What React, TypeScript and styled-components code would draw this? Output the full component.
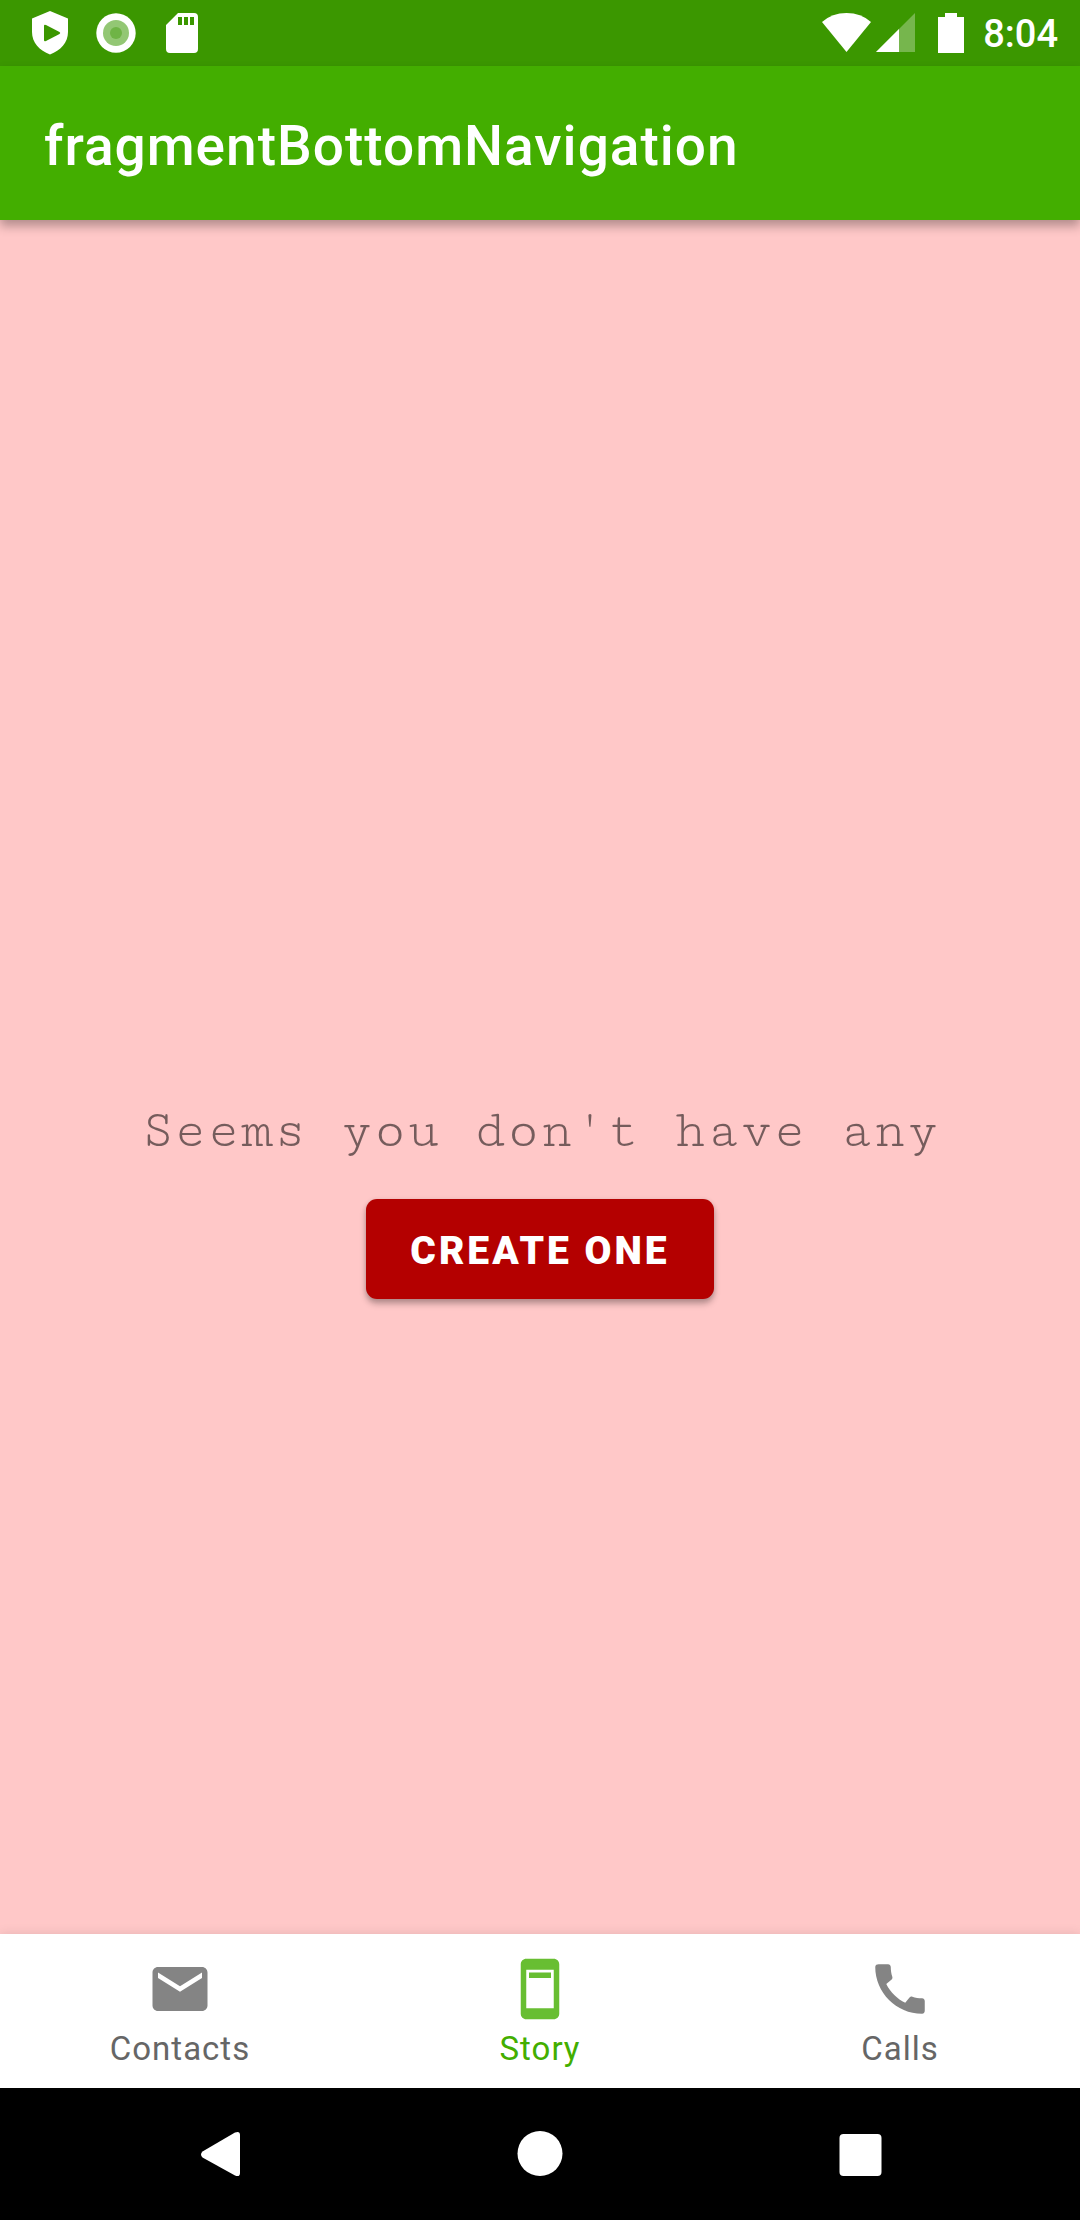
import React, { useState } from "react";
import styled, { createGlobalStyle } from "styled-components";

const GlobalStyle = createGlobalStyle`
  *, *::before, *::after { box-sizing: border-box; }
  body {
    margin: 0;
    background: #ffc8c8;
    font-family: Roboto, "Noto Sans", sans-serif;
  }
`;

const Screen = styled.div`
  display: flex;
  flex-direction: column;
  min-height: 100vh;
`;

const StatusBar = styled.div`
  display: flex;
  align-items: center;
  justify-content: space-between;
  height: 66px;
  padding: 0 22px 0 17px;
  background: #3b9700;
  color: #fff;
`;

const StatusGroup = styled.div`
  display: flex;
  align-items: center;
`;

const Glyph = styled.svg`
  display: block;
  height: 66px;
  fill: currentColor;
`;

const Clock = styled.time`
  padding-top: 2px;
  font-size: 38px;
  font-weight: 500;
  line-height: 66px;
`;

const AppBar = styled.header`
  display: flex;
  align-items: center;
  height: 154px;
  padding: 6px 44px 0;
  background: #43ae00;
  box-shadow: 0 6px 10px rgba(0, 0, 0, 0.3);
  z-index: 1;
`;

const Title = styled.h1`
  margin: 0;
  color: #fff;
  font-size: 55px;
  font-weight: 500;
  letter-spacing: 1px;
  line-height: 66px;
`;

const Content = styled.main`
  display: flex;
  flex: 1;
  flex-direction: column;
  align-items: center;
  justify-content: center;
  gap: 33px;
  padding-top: 240px;
  background: #ffc8c8;
`;

const Message = styled.p`
  margin: 0;
  color: rgba(0, 0, 0, 0.54);
  font-family: "Cutive Mono", "Liberation Mono", "Courier New", monospace;
  font-size: 55px;
  line-height: 70px;
  text-align: center;
`;

const CreateButton = styled.button`
  height: 100px;
  padding: 4px 44px 0;
  border: 0;
  border-radius: 11px;
  background: #b40000;
  box-shadow: 0 5px 6px rgba(0, 0, 0, 0.26), 0 1px 5px rgba(0, 0, 0, 0.12);
  color: #fff;
  font-family: inherit;
  font-size: 39px;
  font-weight: 900;
  letter-spacing: 3px;
  text-transform: uppercase;
  cursor: pointer;
`;

const Tabs = styled.nav`
  display: flex;
  height: 154px;
  background: #fff;
  box-shadow: 0 0 11px rgba(0, 0, 0, 0.1);
  z-index: 1;
`;

const Tab = styled.a<{ $active: boolean }>`
  display: flex;
  flex: 1;
  flex-direction: column;
  align-items: center;
  gap: 7px;
  padding-top: 22px;
  color: ${(p) => (p.$active ? "#43ae00" : "#666")};
  text-decoration: none;
`;

const TabIcon = styled.svg`
  width: 66px;
  height: 66px;
  fill: currentColor;
  opacity: 0.8;
`;

const TabLabel = styled.span`
  font-size: 33px;
  letter-spacing: 1px;
  line-height: 40px;
`;

const SystemBar = styled.div`
  display: flex;
  height: 132px;
  padding: 0 60px;
  background: #000;
`;

const SystemButton = styled.button`
  display: flex;
  flex: 1;
  align-items: center;
  justify-content: center;
  padding: 0;
  border: 0;
  background: none;
  color: #fff;
  cursor: pointer;
`;

const tabs = [
  {
    id: "contacts",
    label: "Contacts",
    path: "M20 4H4c-1.100 0-2 .9-2 2v12c0 1.100.9 2 2 2h16c1.100 0 2-.9 2-2V6c0-1.100-.9-2-2-2zm0 4l-8 5-8-5V6l8 5 8-5v2z",
  },
  {
    id: "story",
    label: "Story",
    path: "M17 1H7c-1.100 0-2 .9-2 2v18c0 1.100.9 2 2 2h10c1.100 0 2-.9 2-2V3c0-1.100-.9-2-2-2zm0 18H7V5h10v14zM8 6h8v2H8z",
  },
  {
    id: "calls",
    label: "Calls",
    path: "M20.010 15.380c-1.230 0-2.420-.2-3.530-.56-.35-.12-.74-.03-1.010.24l-1.570 1.970c-2.830-1.350-5.480-3.900-6.890-6.830l1.950-1.660c.27-.28.35-.67.24-1.020-.37-1.110-.56-2.300-.56-3.530 0-.54-.45-.99-.99-.99H4.190C3.650 3 3 3.240 3 3.990 3 13.280 10.730 21 20.010 21c.71 0 .99-.63.99-1.180v-3.450c0-.54-.45-.99-.99-.99z",
  },
];

export default function App() {
  const [active, setActive] = useState("story");

  return (
    <Screen>
      <GlobalStyle />
      <StatusBar>
        <StatusGroup>
          <Glyph width="66" viewBox="0 0 66 66" aria-hidden="true">
            <path
              fillRule="evenodd"
              d="M33 11L15 18.500V32c0 10.500 7.500 18.500 18 22.500 10.500-4 18-12 18-22.500V18.500zM27 26q0-2 2-1l13.500 7q1.500 1 0 2L29 41q-2 1-2-1z"
            />
          </Glyph>
          <Glyph width="66" viewBox="0 0 66 66" aria-hidden="true">
            <circle cx="33" cy="33" r="19.700" />
            <circle cx="33" cy="33" r="13" fill="#93c774" />
            <circle cx="33" cy="33" r="6" fill="#6fb446" />
          </Glyph>
          <Glyph width="66" viewBox="0 0 66 66" aria-hidden="true">
            <path
              fillRule="evenodd"
              d="M29 13h16q4 0 4 4v32q0 4-4 4H21q-4 0-4-4V25zM29 17v8h4v-8zM35 17v8h4v-8zM41 17v8h4v-8z"
            />
          </Glyph>
        </StatusGroup>
        <StatusGroup>
          <Glyph width="52" viewBox="0 0 52 66" aria-hidden="true">
            <path d="M1 22Q11 13 25.500 13T50 22L25.500 52z" />
          </Glyph>
          <Glyph width="44" viewBox="0 0 44 66" aria-hidden="true">
            <path d="M42 13v39H3z" opacity="0.3" />
            <path d="M26 29v23H3z" />
          </Glyph>
          <Glyph width="66" viewBox="0 0 66 66" aria-hidden="true">
            <path d="M28 13h12v4h7v36H21V17h7z" />
          </Glyph>
          <Clock>8:04</Clock>
        </StatusGroup>
      </StatusBar>

      <AppBar>
        <Title>fragmentBottomNavigation</Title>
      </AppBar>

      <Content>
        <Message>Seems you don't have any</Message>
        <CreateButton type="button">Create one</CreateButton>
      </Content>

      <Tabs>
        {tabs.map((tab) => (
          <Tab
            key={tab.id}
            href={`#${tab.id}`}
            $active={tab.id === active}
            aria-current={tab.id === active ? "page" : undefined}
            onClick={() => setActive(tab.id)}
          >
            <TabIcon viewBox="0 0 24 24" aria-hidden="true">
              <path fillRule="evenodd" d={tab.path} />
            </TabIcon>
            <TabLabel>{tab.label}</TabLabel>
          </Tab>
        ))}
      </Tabs>

      <SystemBar>
        <SystemButton type="button" aria-label="Back">
          <Glyph width="66" viewBox="0 0 66 66" aria-hidden="true">
            <path d="M15.500 30.500L48 11.500q5-2 5 2.500v38q0 4.500-5 2.500L15.500 36.500q-3-3 0-6z" />
          </Glyph>
        </SystemButton>
        <SystemButton type="button" aria-label="Home">
          <Glyph width="66" viewBox="0 0 66 66" aria-hidden="true">
            <circle cx="33" cy="32.500" r="22.500" />
          </Glyph>
        </SystemButton>
        <SystemButton type="button" aria-label="Overview">
          <Glyph width="66" viewBox="0 0 66 66" aria-hidden="true">
            <rect x="12.500" y="13" width="42" height="42" rx="4" />
          </Glyph>
        </SystemButton>
      </SystemBar>
    </Screen>
  );
}
